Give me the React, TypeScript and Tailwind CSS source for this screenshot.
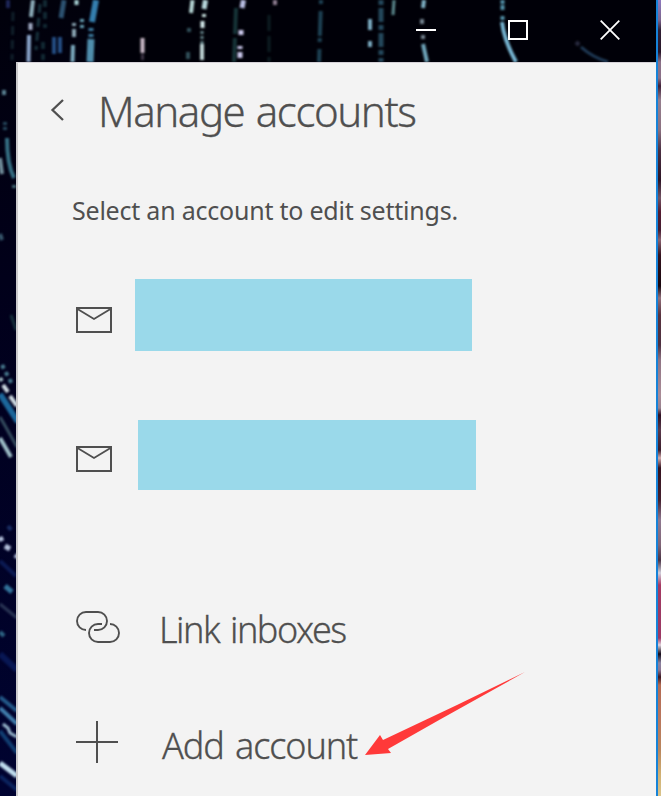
import type { ReactNode } from "react";

type Streak = [d: string, color: string, width: number, dash?: string];

const streaks: Streak[] = [
  ["M33 0 L31 17", "#8fb0bd", 4],
  ["M30.500 23 V30", "#a5afc8", 4],
  ["M29 35 L28.500 62", "#8ba6cc", 4],
  ["M8 0 V8", "#1d2659", 4],
  ["M13 12 L12 60", "#10202b", 3, "9 5"],
  ["M40 4 L36 50", "#17313c", 3, "9 5"],
  ["M45 0 V28 M43 42 V60", "#112833", 4, "7 5"],
  ["M64 0 L61 18", "#2c5271", 5],
  ["M54 37 V54 M60 37 V53", "#244d83", 4],
  ["M76.500 0 V5", "#a9d5d7", 4],
  ["M74 23 V37", "#8ba6b4", 4, "3 3 8 2"],
  ["M73 45 L72.500 62", "#7cabc0", 4],
  ["M82 19 V30", "#68a1b5", 4, "3 3"],
  ["M96 0 L92 22", "#347eaf", 6],
  ["M91 28 V37", "#3e7da3", 5, "3 3"],
  ["M91 39 L90 62", "#4f8eae", 7],
  ["M142.500 38 V53", "#cbbbca", 4],
  ["M142.500 54 V60", "#3d3547", 3],
  ["M192.500 0 L191 13", "#b8d8d8", 4],
  ["M205.500 0 L204 9", "#b7d7dc", 5],
  ["M204 14 V17", "#c8e1df", 4],
  ["M202.500 21 V28", "#d8eef0", 4],
  ["M202 31 V44", "#698990", 3, "3 2"],
  ["M202 44 V60", "#bfd4d6", 4],
  ["M189 28 V32 M188 52 V59", "#31505b", 4],
  ["M243.500 0 L242 8", "#b8bde2", 5],
  ["M236 8 L234 62", "#163438", 4, "26 4"],
  ["M241 30 V35 M240 46 V49 M240 52 V58", "#ccc9ee", 5],
  ["M275 0 V5", "#8e7d91", 4],
  ["M269 15 V62", "#0d1e23", 3, "16 5"],
  ["M321 0 L319 62", "#1d4154", 4, "4 7 25 2"],
  ["M370 19 V30 M370 41 V47", "#7babc2", 4],
  ["M381 0 V62", "#24485d", 5, "5 3 14 3"],
  ["M394 0 L393 15", "#5d8b91", 3],
  ["M424 0 L423 8", "#7fb2c7", 4],
  ["M422 19 V24 M423 35 V39", "#748390", 4],
  ["M423 44 L427 62", "#6fa5bb", 4],
  ["M502.500 0 V20", "#5292aa", 4, "4 1 5 6"],
  ["M502 22 Q504 40 516 62", "#77b6d4", 4],
  ["M576 42 L579 45", "#282a40", 4],
  ["M581 47 Q592 57 608 62", "#203c59", 3],
  ["M4 90 V95", "#5a8191", 4],
  ["M5 122 V130", "#26485d", 4, "3 2"],
  ["M7 138 Q7 164 14 178", "#367085", 4],
  ["M0 158 L2 174", "#74919f", 4],
  ["M14 185 V188", "#476d78", 4],
  ["M0 234 L2 240", "#38576d", 4],
  ["M11 315 L16 330", "#16313d", 3],
  ["M2 365 L12 384", "#497d91", 4, "4 4"],
  ["M0 378 L2 381", "#a8c3c9", 4],
  ["M3 385 L8 392 M10 396 L17 406", "#d1dee5", 4],
  ["M0 394 L18 422", "#1c679b", 6],
  ["M0 417 Q7 429 17 447", "#354d5f", 3],
  ["M0 438 L11 457", "#9fc0c9", 4],
  ["M0 537 L2 541 M5 546 L10 549 M15 555 L18 557", "#b5c2dd", 5],
  ["M8 526 L11 530", "#192d63", 4],
  ["M0 561 L16 576", "#0b1a53", 4],
  ["M5 586 L12 592", "#32739b", 5],
  ["M0 604 L17 618", "#293554", 3],
  ["M0 632 L4 636", "#2d6484", 4],
  ["M0 654 L17 670", "#081754", 6],
  ["M0 697 L17 711", "#235a8a", 4],
  ["M0 708 L17 724", "#417ead", 4],
  ["M3 724 L8 728 L10 733 L17 737", "#9bbbd0", 3],
  ["M0 731 L17 753", "#103e72", 4],
  ["M0 763 L17 776", "#c1deef", 5],
  ["M0 776 L17 790", "#0b245f", 4],
];

function StarTrails() {
  return (
    <svg className="absolute inset-0" width="656" height="796" viewBox="0 0 656 796" fill="none" aria-hidden="true">
      <defs>
        <linearGradient id="night" x1="0" y1="0" x2="0" y2="1">
          <stop offset="0" stopColor="#01010b" />
          <stop offset=".35" stopColor="#01001a" />
          <stop offset="1" stopColor="#000331" />
        </linearGradient>
        <filter id="soft" x="0" y="0" width="656" height="796" filterUnits="userSpaceOnUse" colorInterpolationFilters="sRGB">
          <feGaussianBlur stdDeviation="1" />
        </filter>
      </defs>
      <path fill="url(#night)" d="M0 0H656V796H0z" />
      <path fill="#000008" d="M100 0H656V62H100z" />
      <g filter="url(#soft)">
        {streaks.map(([d, color, width, dash]) => (
          <path key={d} d={d} stroke={color} strokeWidth={width} strokeDasharray={dash} />
        ))}
      </g>
    </svg>
  );
}

function MailIcon() {
  return (
    <svg className="block shrink-0" width="36" height="26" viewBox="0 0 36 26" fill="none" stroke="#4f4f4f" strokeWidth="2">
      <path d="M1 1h34v24H1z" />
      <path d="M1.500 2 18 12 34.500 2" strokeWidth="1.900" />
    </svg>
  );
}

function LinkIcon() {
  return (
    <svg className="block shrink-0" width="44" height="32" viewBox="0 0 44 32" fill="none" stroke="#4f4f4f" strokeWidth="1.900">
      <path d="M10 19A9 9 0 0 1 10 1h12a9 9 0 0 1 0 18h-4" />
      <path d="M26 13h-4a9 9 0 0 0 0 18h12a9 9 0 0 0 0-18" />
    </svg>
  );
}

function ActionRow({ icon, className, children }: { icon: ReactNode; className: string; children: ReactNode }) {
  return (
    <button className="flex items-center pl-[58px] text-left">
      <span className="flex shrink-0">{icon}</span>
      <span
        className={`whitespace-nowrap text-[36px] font-light leading-none [-webkit-text-stroke:0.3px_#4f4f4f] [word-spacing:3px] ${className}`}
      >
        {children}
      </span>
    </button>
  );
}

export default function App() {
  return (
    <div className="flex h-[796px] w-[661px] overflow-hidden bg-[#000008] font-['Noto_Sans','Open_Sans',sans-serif] text-[#4f4f4f]">
      <div className="relative flex w-[656px] shrink-0 flex-col">
        <StarTrails />
        <header className="relative flex h-[62px] shrink-0 justify-end pr-[35px] pt-5">
          <div className="flex gap-[72px]">
            <svg width="20" height="20" stroke="white" strokeWidth="2"><path d="M0 10H20" /></svg>
            <svg width="20" height="20" fill="none" stroke="white" strokeWidth="2"><path d="M1 1H19V19H1z" /></svg>
            <svg width="21" height="20" stroke="white" strokeWidth="1.800"><path d="M.700 .700 19.300 19.300M19.300 .700 .700 19.300" /></svg>
          </div>
        </header>
        <main className="relative ml-4 flex flex-1 flex-col border-l-2 border-t border-l-[#cbcacc] border-t-[#d6d2d8] bg-[#f3f3f3] pt-px">
          <div className="flex h-[92px] items-center pl-8">
            <svg className="mr-[34px] block shrink-0" width="14" height="22" fill="none" stroke="#4f4f4f" strokeWidth="2.300">
              <path d="M13 1 2.500 11 13 21" />
            </svg>
            <h1 className="whitespace-nowrap pt-0.5 text-[42px] font-light leading-none tracking-[-1.45px] [-webkit-text-stroke:0.3px_#4f4f4f] [word-spacing:2px]">
              Manage accounts
            </h1>
          </div>
          <div className="flex h-[109px] items-center pl-[54px]">
            <p className="whitespace-nowrap text-[25px] leading-none tracking-[-0.22px]">Select an account to edit settings.</p>
          </div>
          <div className="flex pl-[58px] pt-[14px]">
            <div className="w-[59px] pt-7"><MailIcon /></div>
            <div className="h-[72px] w-[337px] bg-[#9ad9ea]" />
          </div>
          <div className="flex pl-[58px] pt-[69px]">
            <div className="w-[62px] pt-[26px]"><MailIcon /></div>
            <div className="h-[70px] w-[338px] bg-[#9ad9ea]" />
          </div>
          <div className="mt-[116px] flex flex-col gap-[72px]">
            <ActionRow icon={<LinkIcon />} className="pl-[39px] pt-1.5 tracking-[-1.5px]">Link inboxes</ActionRow>
            <ActionRow
              icon={<svg className="block" width="42" height="42" stroke="#4f4f4f" strokeWidth="2"><path d="M0 21H42M21 0V42" /></svg>}
              className="pl-[44px] pt-2 tracking-[-1.1px]"
            >
              Add account
            </ActionRow>
          </div>
        </main>
        <svg className="absolute left-[365px] top-[672px]" width="161" height="84" viewBox="0 0 161 84" fill="#ff3939">
          <path d="M160 0 75 47.500 23 77 26 81 0 83 15 63 18 68 92 33z" />
        </svg>
      </div>
      <div className="w-[2px] shrink-0 bg-[#1683d8]" />
      <div className="w-[3px] shrink-0 bg-[linear-gradient(to_bottom,#8d79be_0px,#7c658d_20px,#302035_30px,#271528_52px,#8b7188_62px,#8b7188_78px,#402037_86px,#967f8f_100px,#8b7180_130px,#4c3144_150px,#2d1425_180px,#745565_198px,#541c31_212px,#451c30_230px,#8b6471_240px,#35131f_255px,#18060d_286px,#93717c_298px,#59333f_315px,#4e3040_345px,#8f7484_360px,#aa8c97_395px,#99828f_408px,#2f1022_415px,#5a3b4d_430px,#3b1c2b_450px,#d5adae_458px,#35121f_468px,#44202e_500px,#8f7990_520px,#806577_545px,#4a3345_560px,#d2cfdb_573px,#a63962_585px,#9d3963_610px,#9c3864_638px,#e1d2dc_645px,#140a17_654px,#8c83a0_663px,#8d7692_670px,#3d1721_677px,#b36b53_685px,#b9755c_715px,#b9865d_750px,#d1b173_775px,#d9c48c_796px)]" />
    </div>
  );
}
